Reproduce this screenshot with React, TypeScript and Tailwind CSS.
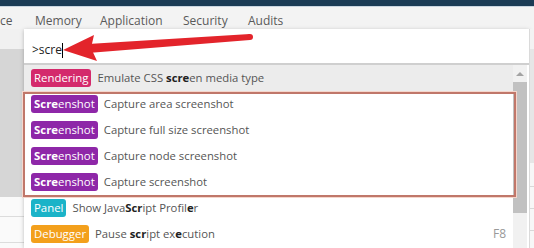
import React from "react";

type Seg = { t: string; b?: boolean };

const rows: {
  badge: Seg[];
  color: string;
  text: Seg[];
  selected?: boolean;
  shortcut?: string;
}[] = [
  {
    badge: [{ t: "Rendering" }],
    color: "bg-[#d42a6c]",
    text: [{ t: "Emulate CSS " }, { t: "scre", b: true }, { t: "en media type" }],
    selected: true,
  },
  {
    badge: [{ t: "Scre", b: true }, { t: "enshot" }],
    color: "bg-[#8e27a8]",
    text: [{ t: "Capture area screenshot" }],
  },
  {
    badge: [{ t: "Scre", b: true }, { t: "enshot" }],
    color: "bg-[#8e27a8]",
    text: [{ t: "Capture full size screenshot" }],
  },
  {
    badge: [{ t: "Scre", b: true }, { t: "enshot" }],
    color: "bg-[#8e27a8]",
    text: [{ t: "Capture node screenshot" }],
  },
  {
    badge: [{ t: "Scre", b: true }, { t: "enshot" }],
    color: "bg-[#8e27a8]",
    text: [{ t: "Capture screenshot" }],
  },
  {
    badge: [{ t: "Panel" }],
    color: "bg-[#1bb3c8]",
    text: [
      { t: "Show Java" },
      { t: "Scr", b: true },
      { t: "ipt Profil" },
      { t: "e", b: true },
      { t: "r" },
    ],
  },
  {
    badge: [{ t: "Debugger" }],
    color: "bg-[#f3a01c]",
    text: [
      { t: "Pause " },
      { t: "scr", b: true },
      { t: "ipt ex" },
      { t: "e", b: true },
      { t: "cution" },
    ],
    shortcut: "F8",
  },
];

export default function App() {
  return (
    <div className="relative w-[534px] h-[248px] overflow-hidden bg-[#f3f3f3] font-['Open_Sans',sans-serif]">
      {/* title bar remnant */}
      <div className="h-[6px] bg-[#1b3b55]" />
      <div className="h-[1px] bg-[#c9d5e0]" />
      {/* tabs */}
      <div className="h-[22px] flex items-center pt-[6px] text-[12px] text-[#5a5a5a]">
        <span className="w-[35px]">ce</span>
        <span className="w-[65px]">Memory</span>
        <span className="w-[83px]">Application</span>
        <span className="w-[65px]">Security</span>
        <span>Audits</span>
      </div>

      {/* body */}
      <div className="flex h-[219px]">
        {/* left strip */}
        <div className="w-[24px] flex flex-col">
          <div className="h-[20px] bg-[#f1f1f1]" />
          <div className="h-[148px] bg-[#d6d6d6]" />
          <div className="flex-1 bg-[#fafafa]">
            <div className="h-[20px] border-b border-[#dcdcdc]" />
            <div className="h-[26px] border-b border-[#dcdcdc]" />
          </div>
        </div>

        {/* command palette */}
        <div className="w-[505px] bg-white flex flex-col shadow-[0_1px_4px_rgba(0,0,0,0.25)]">
          <div className="h-[34px] flex items-center pt-[8px] pl-[8px] text-[12px] text-[#222]">
            <span>&gt;scre</span>
            <span className="inline-block w-[1px] h-[15px] bg-black" />
          </div>
          <div className="h-[2px] bg-[#cfcfcf]" />
          <div className="flex-1 flex min-h-0">
            <div className="flex-1 flex flex-col">
              {rows.map((r, i) => (
                <div
                  key={i}
                  className={`h-[26px] shrink-0 flex items-center pl-[7px] pr-[7px] text-[11.3px] text-[#555] ${
                    r.selected ? "bg-[#ececec]" : "bg-white"
                  }`}
                >
                  <span
                    className={`inline-flex items-center h-[18px] px-[3px] rounded-[3px] text-white text-[11.4px] ${r.color}`}
                  >
                    {r.badge.map((s, j) => (
                      <span key={j} className={s.b ? "font-bold" : ""}>
                        {s.t}
                      </span>
                    ))}
                  </span>
                  <span className="ml-[6px] whitespace-pre">
                    {r.text.map((s, j) => (
                      <span key={j} className={s.b ? "font-bold text-[#222]" : ""}>
                        {s.t}
                      </span>
                    ))}
                  </span>
                  {r.shortcut && (
                    <span className="ml-auto text-[#999] text-[12px]">{r.shortcut}</span>
                  )}
                </div>
              ))}
            </div>
            {/* scrollbar */}
            <div className="w-[14px] bg-[#f1f1f1] flex flex-col items-center">
              <div className="h-[17px] flex items-center justify-center">
                <div className="w-0 h-0 border-l-[4px] border-r-[4px] border-b-[4px] border-l-transparent border-r-transparent border-b-[#a3a3a3]" />
              </div>
              <div className="w-[14px] h-[131px] bg-[#c1c1c1]" />
            </div>
            <div className="w-[2px] bg-white" />
          </div>
        </div>

        {/* right strip */}
        <div className="flex-1 flex flex-col border-l border-[#dadada]">
          <div className="h-[20px] bg-[#f3f3f3]" />
          <div className="h-[114px] bg-[#e6e6e6]" />
          <div className="flex-1 bg-[#f7f7f7]">
            <div className="h-[24px] border-b border-[#d8d8d8]" />
            <div className="h-[22px] border-b border-[#d8d8d8]" />
            <div className="h-[22px] border-b border-[#d8d8d8]" />
          </div>
        </div>
      </div>

      {/* annotation: highlight box */}
      <div className="absolute left-[23px] top-[92px] w-[493px] h-[105px] border-2 border-[#c0776a] shadow-[0_0_0_1px_#f5d6cc] pointer-events-none" />

      {/* annotation: red arrow */}
      <svg
        className="absolute left-0 top-0 pointer-events-none"
        width="534"
        height="248"
        viewBox="0 0 534 248"
      >
        <polygon points="88,44 250,34 250,40 88,53" fill="#e3242b" />
        <circle cx="250" cy="37" r="3" fill="#e3242b" />
        <polygon points="63,50 94,35 91,48 97,61" fill="#e3242b" />
      </svg>
    </div>
  );
}
